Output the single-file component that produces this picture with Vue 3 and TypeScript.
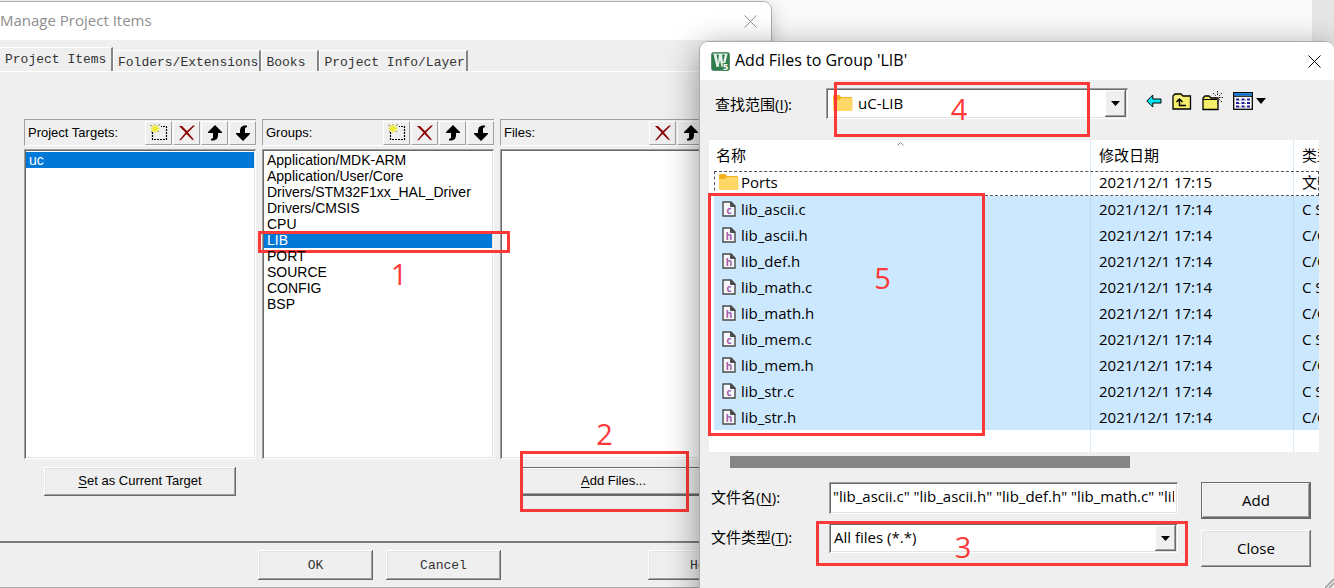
<script setup lang="ts">
import { ref } from 'vue'

interface FileRow {
  name: string
  date: string
  type: string
  kind: 'folder' | 'c' | 'h'
}

const tabs = ['Project Items', 'Folders/Extensions', 'Books', 'Project Info/Layer']
const activeTab = ref(0)

const groups = [
  'Application/MDK-ARM',
  'Application/User/Core',
  'Drivers/STM32F1xx_HAL_Driver',
  'Drivers/CMSIS',
  'CPU',
  'LIB',
  'PORT',
  'SOURCE',
  'CONFIG',
  'BSP',
]

const columns = [
  { title: 'Project Targets:', tools: ['new', 'delete', 'up', 'down'], items: ['uc'], selected: 'uc' },
  { title: 'Groups:', tools: ['new', 'delete', 'up', 'down'], items: groups, selected: 'LIB' },
  { title: 'Files:', tools: ['delete', 'up', 'down'], items: [] as string[], selected: '' },
]

const source = (name: string): FileRow => {
  const isC = name.endsWith('.c')
  return { name, date: '2021/12/1 17:14', type: isC ? 'C Source' : 'C/C++ Header', kind: isC ? 'c' : 'h' }
}

const files: FileRow[] = [
  { name: 'Ports', date: '2021/12/1 17:15', type: '文件夹', kind: 'folder' },
  ...['lib_ascii.c', 'lib_ascii.h', 'lib_def.h', 'lib_math.c', 'lib_math.h', 'lib_mem.c', 'lib_mem.h', 'lib_str.c', 'lib_str.h'].map(source),
]

const fileName = ref('"lib_ascii.c" "lib_ascii.h" "lib_def.h" "lib_math.c" "lib_mem.c" "lib_str.c"')
</script>

<template>
  <main class="desktop">
    <section class="window manage" aria-label="Manage Project Items">
      <header class="titlebar">
        <h1>Manage Project Items</h1>
        <button class="close" aria-label="Close window">
          <svg width="13" height="13" viewBox="0 0 13 13"><path d="M.5.5l12 12M12.5.5l-12 12" /></svg>
        </button>
      </header>

      <nav class="tabs" role="tablist">
        <button
          v-for="(tab, i) in tabs"
          :key="tab"
          class="tab"
          role="tab"
          :class="{ active: i === activeTab }"
          :aria-selected="i === activeTab"
          @click="activeTab = i"
        >{{ tab }}</button>
      </nav>

      <div class="panel">
        <div v-for="(col, ci) in columns" :key="col.title" class="column">
          <div class="col-head">
            <span>{{ col.title }}</span>
            <div class="tools">
              <button v-for="tool in col.tools" :key="tool" :aria-label="tool">
                <svg v-if="tool === 'new'" width="18" height="17" viewBox="0 0 18 17">
                  <path d="M2.5 8v7.500H16.500V2.500H11" fill="none" stroke="#000" stroke-width="1.200" stroke-dasharray="2 1" />
                  <path d="M5 1v8M.5 4.500h9M2 1.500l6 6M8 1.500l-6 6" stroke="#f0ea30" stroke-width="1.300" />
                  <path d="M0 1l2 1M8 1.500l2-1M1 8l1-1M5 0v1M8 7l1 1" stroke="#8a8a60" />
                </svg>
                <svg v-else-if="tool === 'delete'" width="18" height="16" viewBox="0 0 18 16">
                  <path d="M1 1l3 0 5 5 6-5.500 2 0-7 7 5 6 1 2-2-1-5.500-5.500L3 15l-2 .5 6.500-8z" fill="#8b0000" />
                </svg>
                <svg v-else-if="tool === 'up'" width="16" height="16" viewBox="0 0 16 16">
                  <path d="M8 0l7 7v1h-4v3l-1 3-3 1.500H4V14l2-1V8H1V7z" />
                </svg>
                <svg v-else width="16" height="16" viewBox="0 0 16 16">
                  <path d="M8 16L1 9V8h4V5l1-3L9 .5h3V2l-2 1v5h5v1z" />
                </svg>
              </button>
            </div>
          </div>
          <ul class="listbox">
            <li v-for="item in col.items" :key="item" :class="{ selected: item === col.selected }">
              {{ item }}
              <span v-if="item === 'LIB'" class="mark mark-1"><b>1</b></span>
            </li>
          </ul>
          <div class="col-foot">
            <button v-if="ci === 0" class="raised"><u>S</u>et as Current Target</button>
            <template v-if="ci === 2">
              <button class="raised default"><u>A</u>dd Files...</button>
              <span class="mark mark-2"><b>2</b></span>
            </template>
          </div>
        </div>
      </div>

      <footer class="actions">
        <button class="raised">OK</button>
        <button class="raised">Cancel</button>
        <button class="raised help">Help</button>
      </footer>
    </section>

    <section class="window dialog" aria-label="Add Files to Group 'LIB'">
      <header class="titlebar">
        <svg class="logo" width="19" height="19" viewBox="0 0 19 19">
          <rect x=".5" y=".5" width="18" height="18" rx="2" fill="#2f7d4b" stroke="#5d8f6e" />
          <path d="M2.500 2h3l1.500 9 1-9h3l1 9 2-9h2.500l-3 13h-3L9 8l-1.500 7h-2z" fill="#e8f2ec" />
          <path d="M2.500 2h14" stroke="#e8f2ec" stroke-width="1" />
          <text x="12" y="17.500" font-size="9" font-weight="700" fill="#fff" stroke="#2f7d4b" stroke-width="2" paint-order="stroke">5</text>
        </svg>
        <h2>Add Files to Group 'LIB'</h2>
        <button class="close" aria-label="Close dialog">
          <svg width="13" height="13" viewBox="0 0 13 13"><path d="M.5.5l12 12M12.5.5l-12 12" /></svg>
        </button>
      </header>

      <div class="lookin">
        <label for="look">查找范围(<u>I</u>):</label>
        <div class="combo">
          <svg class="folder" width="21" height="17" viewBox="0 0 21 17">
            <path d="M1 1q0-1 1-1h5q1 0 2 2h10q1 0 1 1v6H1z" fill="#f2b01e" />
            <path d="M1 6q0-1 1-1h5l2-2h10q1.500 0 1.500 1v11q0 1-1.500 1H2q-1 0-1-1z" fill="#ffd766" />
          </svg>
          <select id="look"><option>uC-LIB</option></select>
          <span class="drop"><svg width="9" height="5" viewBox="0 0 9 5"><path d="M0 0h9L4.500 5z" /></svg></span>
          <span class="mark mark-4"><b>4</b></span>
        </div>
        <div class="icons">
          <button aria-label="Back">
            <svg width="16" height="14" viewBox="0 0 16 14"><path d="M.8 7l6-6v4H15v4H6.800v4z" fill="#00e5ee" stroke="#000" /></svg>
          </button>
          <button aria-label="Up one level">
            <svg width="20" height="17" viewBox="0 0 20 17">
              <path d="M1 16V3l2-2h6l2 2h7.500v13z" fill="#f5ee6a" stroke="#000" stroke-width="1.300" />
              <path d="M2 4.500h8" stroke="#fffcc0" />
              <path d="M7.500 6v6.500H14M4.500 9l3-3 3 3" fill="none" stroke="#000" stroke-width="1.500" />
            </svg>
          </button>
          <button aria-label="New folder">
            <svg width="21" height="20" viewBox="0 0 21 20">
              <path d="M1 18.500V7l2-2h4l2 2h7v11.500z" fill="#f5ee6a" stroke="#000" stroke-width="1.300" />
              <path d="M1 8.500h14" stroke="#000" />
              <path d="M15.500 0v4M15.500 9v4M9.500 6.500h4M17 6.500h4M11 2l3 3M20 2l-3 3M20 11l-3-3" stroke="#222" stroke-dasharray="1.500 1" />
            </svg>
          </button>
          <button class="views" aria-label="Views">
            <svg width="20" height="18" viewBox="0 0 20 18">
              <rect x=".7" y=".7" width="18.600" height="16.600" fill="#fff" stroke="#000" stroke-width="1.300" />
              <path d="M1 2.500h18" stroke="#0a74da" stroke-width="2.500" />
              <path d="M0 4.300h20" stroke="#000" />
              <path d="M3 7.500h3M8.500 7.500h3M14 7.500h3M3 11h3M8.500 11h3M14 11h3M3 14.500h3M8.500 14.500h3M14 14.500h3" stroke="#1c1c9c" stroke-width="2" />
              <path d="M6 8h1.500M11.500 8h1.500M6 11.500h1.500M11.500 11.500h1.500M6 15h1.500M11.500 15h1.500" stroke="#888" />
            </svg>
            <svg width="10" height="6" viewBox="0 0 10 6"><path d="M0 0h10L5 6z" /></svg>
          </button>
        </div>
      </div>

      <div class="files">
        <div class="clip">
          <table>
            <colgroup><col /><col class="c-date" /><col class="c-type" /></colgroup>
            <thead>
              <tr><th>名称</th><th>修改日期</th><th>类型</th></tr>
            </thead>
            <tbody>
              <tr v-for="file in files" :key="file.name" :class="file.kind === 'folder' ? 'focused' : 'picked'">
                <td>
                  <span class="name">
                    <svg v-if="file.kind === 'folder'" width="21" height="17" viewBox="0 0 21 17">
                      <path d="M1 1q0-1 1-1h5q1 0 2 2h10q1 0 1 1v6H1z" fill="#f2b01e" />
                      <path d="M1 6q0-1 1-1h5l2-2h10q1.500 0 1.500 1v11q0 1-1.500 1H2q-1 0-1-1z" fill="#ffd766" />
                    </svg>
                    <svg v-else width="21" height="16" viewBox="0 0 21 16">
                      <path d="M5 1h8l4 4v10H5z" fill="#f7f7f9" stroke="#4a4a4a" stroke-width="1.400" />
                      <path d="M12.500 1v4.500H17z" fill="#4a4a4a" stroke="#4a4a4a" />
                      <text x="11" y="13" text-anchor="middle" font-size="10" font-weight="700" fill="#a45cab">{{ file.kind }}</text>
                    </svg>
                    {{ file.name }}
                  </span>
                </td>
                <td>{{ file.date }}</td>
                <td>{{ file.type }}</td>
              </tr>
              <tr class="rest" aria-hidden="true"><td></td><td></td><td></td></tr>
            </tbody>
          </table>
        </div>
        <svg class="sort" width="7" height="4" viewBox="0 0 7 4"><path d="M.5 3.500l3-3 3 3" fill="none" stroke="#888" /></svg>
        <span class="mark mark-5"><b>5</b></span>
      </div>
      <div class="scroll"><div class="thumb"></div></div>

      <form class="form" @submit.prevent>
        <label for="fname">文件名(<u>N</u>):</label>
        <input id="fname" v-model="fileName" type="text" />
        <button class="raised default">Add</button>
        <label for="ftype">文件类型(<u>T</u>):</label>
        <div class="combo type">
          <select id="ftype"><option>All files (*.*)</option></select>
          <span class="drop"><svg width="9" height="5" viewBox="0 0 9 5"><path d="M0 0h9L4.500 5z" /></svg></span>
          <span class="mark mark-3"><b>3</b></span>
        </div>
        <button class="raised" type="button">Close</button>
      </form>
      <svg class="grip" width="9" height="9" viewBox="0 0 9 9"><path d="M0 9l9-9M4 9l5-5" stroke="#999" stroke-width="1.500" /></svg>
    </section>
  </main>
</template>

<style>
body {
  margin: 0;
}
</style>

<style scoped>
* {
  box-sizing: border-box;
}
.desktop {
  position: relative;
  min-height: 100vh;
  overflow: hidden;
  background: linear-gradient(to left, #e6e6e6 22px, #fafafa 22px);
  font-family: "Liberation Sans", "Noto Sans CJK SC", sans-serif;
  font-size: 13px;
  color: #000;
}
button,
input,
select {
  margin: 0;
  padding: 0;
  border: 0;
  border-radius: 0;
  background: none;
  font: inherit;
  color: inherit;
}
svg {
  display: block;
  flex: none;
}
u {
  text-underline-offset: 2px;
}
.window {
  position: absolute;
  display: flex;
  flex-direction: column;
  background: #efefef;
  border: 1px solid #acacac;
}
.manage {
  top: 1px;
  bottom: 0;
  left: 0;
  right: 562px;
  border-left: 0;
  border-top-right-radius: 9px;
  box-shadow: 0 4px 18px rgba(0, 0, 0, 0.2);
}
.dialog {
  top: 41px;
  bottom: -12px;
  left: 699px;
  right: 0;
  border-right: 0;
  border-radius: 9px;
  box-shadow: 0 8px 34px rgba(0, 0, 0, 0.42);
  font-family: "Open Sans", "Noto Sans CJK SC", sans-serif;
  font-size: 15px;
}
.titlebar {
  display: flex;
  align-items: center;
  height: 38px;
  flex: none;
  background: #fff;
  border-radius: 8px 8px 0 0;
}
.manage .titlebar {
  border-top-left-radius: 0;
  padding-right: 14px;
  color: #8e8e8e;
}
.dialog .titlebar {
  padding: 0 13px 0 11px;
}
h1,
h2 {
  margin: 0;
  padding-bottom: 2px;
  font-family: "Open Sans", sans-serif;
  font-size: 15px;
  font-weight: 400;
  flex: 1;
}
h2 {
  font-size: 16px;
}
.logo {
  margin-right: 5px;
}
.close path {
  stroke: currentColor;
  fill: none;
}

.tabs {
  display: flex;
  align-items: flex-end;
  height: 32px;
  flex: none;
  border-bottom: 1px solid #fff;
}
.tab {
  height: 21px;
  min-width: 58px;
  padding: 2px 1px 0 4px;
  border-top: 1px solid #fff;
  border-left: 1px solid #fff;
  border-right: 2px solid #858585;
  font-family: "Liberation Mono", monospace;
  text-align: left;
  color: #333;
  white-space: nowrap;
}
.tab.active {
  height: 24px;
  min-width: 113px;
  padding: 0 0 0 5px;
  border-left: 0;
}

.panel {
  display: grid;
  grid-template-columns: repeat(3, 1fr);
  gap: 6px;
  padding: 47px 39px 0 24px;
}
.column {
  display: flex;
  flex-direction: column;
  min-width: 0;
}
.col-head {
  display: flex;
  align-items: center;
  justify-content: space-between;
  height: 27px;
  padding-left: 3px;
  margin-bottom: 3px;
  border-top: 1px solid #a0a0a0;
  border-left: 1px solid #a0a0a0;
  border-bottom: 1px solid #fff;
}
.tools {
  display: flex;
  gap: 1px;
}
.tools button {
  display: flex;
  align-items: center;
  justify-content: center;
  width: 27px;
  height: 24px;
  border: 1px solid #fff;
  border-right-color: #a0a0a0;
  border-bottom-color: #a0a0a0;
}
.listbox {
  height: 310px;
  margin: 0;
  padding: 3px 2px 2px;
  list-style: none;
  font-size: 14px;
  background: #fff;
  box-shadow: inset 1px 1px #a0a0a0, inset -1px -1px #fff, inset 2px 2px #696969, inset -2px -2px #e3e3e3;
}
.listbox li {
  position: relative;
  padding-left: 3px;
  line-height: 16px;
  white-space: nowrap;
}
.selected {
  background: #0078d7;
  color: #fff;
}
.col-foot {
  position: relative;
  height: 82px;
  padding: 8px 0 0 20px;
}
.raised {
  width: 192px;
  height: 29px;
  padding-bottom: 2px;
  background: #efefef;
  box-shadow: inset -1px -1px #696969, inset 1px 1px #fff, inset -2px -2px #a0a0a0, inset 2px 2px #e3e3e3;
}
.raised.default {
  border: 1px solid #696969;
}
.col-foot .default {
  width: 187px;
}
.actions {
  display: flex;
  gap: 13px;
  padding: 7px 8px 0 258px;
  border-top: 2px solid #7c7c7c;
}
.actions .raised {
  width: 115px;
  height: 30px;
  padding-bottom: 0;
  font-family: "Liberation Mono", monospace;
  color: #333;
}
.actions .help {
  margin-left: auto;
}

.lookin {
  display: flex;
  align-items: center;
  height: 60px;
  padding: 0 68px 14px 15px;
  flex: none;
}
.lookin label {
  width: 111px;
}
.combo {
  position: relative;
  flex: 1;
  height: 31px;
  padding: 2px;
  background: #fff;
  box-shadow: inset 1px 1px #a0a0a0, inset -1px -1px #fff, inset 2px 2px #696969, inset -2px -2px #e3e3e3;
}
.combo select {
  width: 100%;
  height: 100%;
  padding: 0 0 2px 3px;
  appearance: none;
}
.lookin select {
  padding: 0 0 0 30px;
}
.folder {
  position: absolute;
  left: 6px;
  top: 7px;
}
.drop {
  position: absolute;
  top: 2px;
  right: 2px;
  bottom: 2px;
  width: 21px;
  display: flex;
  align-items: center;
  justify-content: center;
  background: #efefef;
  pointer-events: none;
  box-shadow: inset -1px -1px #696969, inset 1px 1px #fff, inset -2px -2px #a0a0a0;
}
.icons {
  display: flex;
  align-items: center;
  gap: 10px;
  padding: 0 0 4px 18px;
}
.views {
  display: flex;
  align-items: center;
  gap: 3px;
}

.files {
  position: relative;
  margin: 0 15px 0 9px;
  background: #fff;
}
.clip {
  overflow: hidden;
  padding-left: 5px;
}
table {
  width: 100%;
  table-layout: fixed;
  border-spacing: 0;
}
.c-date {
  width: 203px;
}
.c-type {
  width: 26px;
}
th,
td {
  height: 26px;
  padding: 0 0 0 8px;
  border-left: 1px solid #dcebf8;
  font-weight: 400;
  line-height: 20px;
  text-align: left;
  white-space: nowrap;
  overflow: hidden;
}
th:first-child,
td:first-child {
  border-left: 0;
  padding-left: 4px;
}
th {
  height: 31px;
  padding-bottom: 2px;
}
th:first-child {
  padding-left: 2px;
}
.focused td {
  height: 25px;
  padding-bottom: 3px;
}
.focused {
  outline: 1px dashed #555;
  outline-offset: -1px;
}
.picked {
  background: #cce8ff;
}
.picked td {
  border-left-color: #b8dcf8;
}
.rest td {
  height: 22px;
}
.name {
  display: flex;
  align-items: center;
  gap: 2px;
}
.sort {
  position: absolute;
  left: 188px;
  top: 2px;
}
.scroll {
  padding: 4px 204px 0 30px;
}
.thumb {
  height: 12px;
  background: #858585;
}

.form {
  display: grid;
  grid-template-columns: 118px 1fr 133px;
  row-gap: 11px;
  align-items: start;
  padding: 14px 23px 0 11px;
}
.form input {
  width: 100%;
  height: 32px;
  padding: 0 4px 5px;
  background: #fff;
  box-shadow: inset 1px 1px #a0a0a0, inset -1px -1px #fff, inset 2px 2px #696969, inset -2px -2px #e3e3e3;
  min-width: 0;
}
.form .raised {
  width: 110px;
  height: 37px;
  justify-self: end;
}
.form label {
  padding-top: 4px;
  line-height: 22px;
}
.form label[for="ftype"] {
  padding-top: 0;
  margin-top: -4px;
}
.type {
  height: 30px;
  margin-top: -7px;
}
.grip {
  position: absolute;
  right: 0;
  bottom: 11px;
}

.mark {
  position: absolute;
  display: flex;
  justify-content: center;
  border: 3px solid #fc3838;
  color: #fc3838;
  font-family: "Open Sans", sans-serif;
  font-size: 29px;
  line-height: 30px;
  pointer-events: none;
}
.mark b {
  font-weight: 400;
}
.mark-1 {
  top: -1px;
  left: -6px;
  right: -18px;
  height: 22px;
}
.mark-1 b {
  margin: 25px 0 0 30px;
}
.mark-2 {
  top: -8px;
  left: 20px;
  width: 169px;
  height: 61px;
}
.mark-2 b {
  margin-top: -35px;
}
.mark-3 {
  top: -2px;
  left: -13px;
  right: -10px;
  height: 45px;
}
.mark-3 b {
  margin: 8px 78px 0 0;
}
.mark-4 {
  top: -6px;
  left: 8px;
  right: 38px;
  height: 55px;
}
.mark-4 b {
  margin: 9px 6px 0 0;
}
.mark-5 {
  top: 53px;
  left: -1px;
  width: 277px;
  height: 243px;
}
.mark-5 b {
  margin: 67px 0 0 72px;
}
</style>
